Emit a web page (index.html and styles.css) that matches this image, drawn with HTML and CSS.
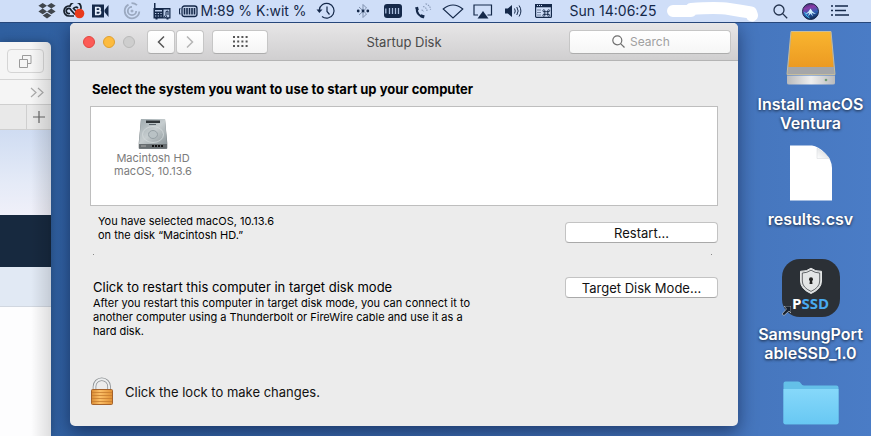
FILE: index.html
```
<!DOCTYPE html>
<html lang="en">
<head>
    <meta charset="UTF-8">
    <meta name="viewport" content="width=device-width, initial-scale=1.0">
    <title>Startup Disk</title>
    <link rel="stylesheet" href="styles.css">
</head>
<body>
    <header class="menubar">
        <div class="menu-group tight">
            <button class="menu-item" aria-label="Dropbox">
                <svg width="18" height="16" viewBox="0 0 18 16" fill="#40464d"><path d="M4.700 0L9 2.800 4.700 5.600 0.400 2.800zM13.300 0L17.600 2.800 13.300 5.600 9 2.800zM4.700 5.600L9 8.400 4.700 11.200 0.400 8.400zM13.300 5.600L17.600 8.400 13.300 11.200 9 8.400zM9 9.800l4.300 2.800L9 15.400l-4.300-2.800z"/></svg>
            </button>
            <button class="menu-item" aria-label="Creative Cloud">
                <svg width="22" height="16" viewBox="0 0 22 16"><g fill="none" stroke="#17202c" stroke-width="1.700"><path d="M11 13H6a5 5 0 1 1 1-9.900A5.500 5.500 0 0 1 17.800 6"/><path d="M12 11.500L8 7a2.500 2.500 0 1 0-2 3.500h1"/><path d="M13.500 8.500L10.500 5.500a3 3 0 0 1 4.500-.5"/></g><circle cx="16.500" cy="10.500" r="4.800" fill="#e8391c"/></svg>
            </button>
            <button class="menu-item" aria-label="Recorder">
                <svg width="17" height="14" viewBox="0 0 17 14"><path d="M0 0.500h12v13H0zM12.500 6L16.500 1v12L12.500 8z" fill="#15294a"/><path d="M3.800 3.500h2.800a1.500 1.500 0 0 1 0 3.200 1.700 1.700 0 0 1 0 3.800H3.800zM4 6.800h3" fill="none" stroke="#e6effc" stroke-width="1.700"/></svg>
            </button>
        </div>
        <div class="menu-group">
            <button class="menu-item" aria-label="Sync">
                <svg width="18" height="18" viewBox="0 0 18 18" fill="none" stroke="#9ba9c0" stroke-width="1.800"><path d="M5.500 2.600a7.300 7.300 0 1 0 10.800 6.900"/><path d="M9 4.800A4.200 4.200 0 1 0 13.200 9"/><path d="M8.500 1.200A8 8 0 0 1 14 3.200"/><circle cx="9" cy="9" r="0.600"/></svg>
            </button>
            <button class="menu-item" aria-label="Radio">
                <svg width="18" height="17" viewBox="0 0 18 17"><path d="M1 0h1.500v5H17.500v10.500h-2v1h-2v-1h-9v1h-2v-1H0.500V5H1z" fill="#15294a"/><g fill="#b9cbe8"><path d="M2 7h7v1.500H2zM2 10h1.300v1H2zM4.700 10h1.300v1H4.700zM7.400 10h1.300v1H7.400zM2 12.500h1.300v1H2zM4.700 12.500h1.300v1H4.700zM7.400 12.500h1.300v1H7.400zM10.500 6.500h5.800v7.800h-5.800z"/></g><path d="M12 12.500a1 1 0 1 0 1 0V8.500l2-.5v4" fill="none" stroke="#15294a"/></svg>
            </button>
        </div>
        <button class="menu-item battery">
            <svg width="19" height="13" viewBox="0 0 19 13"><rect x="3" y="1" width="15" height="10.500" rx="2.500" fill="#c6d5ee" stroke="#15294a" stroke-width="1.300"/><path d="M1.500 3.500Q0.500 3.500 0.500 5v2.500q0 1.500 1 1.500" fill="none" stroke="#15294a" stroke-width="1.200"/><path d="M5.500 3v6.500M8 3v6.500M10.500 3v6.500M13 3v6.500M15.500 3v6.500" stroke="#15294a" stroke-width="1.600"/></svg>
            M:89 % K:wit %
        </button>
        <button class="menu-item clock-item" aria-label="Time Machine">
            <svg width="20" height="18" viewBox="0 0 20 18" fill="none" stroke="#15294a" stroke-width="1.200"><path d="M3.300 8A7.400 7.400 0 1 1 6 14.500"/><path d="M11 4.500v5l2.500 3"/><path d="M0.500 7.500h6L3.400 11z" fill="#15294a" stroke="none"/></svg>
        </button>
        <div class="menu-group">
            <button class="menu-item" aria-label="Bluetooth">
                <svg width="14" height="16" viewBox="0 0 14 16"><path d="M3 4l7.500 7L7 14.500v-13L10.500 5 3 12" fill="none" stroke="#7f90ad"/><g fill="#15294a"><circle cx="2.200" cy="8" r="1.400"/><circle cx="7" cy="8" r="1.400"/><circle cx="11.800" cy="8" r="1.400"/></g></svg>
            </button>
            <button class="menu-item" aria-label="Memory">
                <svg width="18" height="14" viewBox="0 0 18 14"><rect width="18" height="14" rx="3" fill="#15294a"/><path d="M1.800 4.500v5M5.500 4v6M8.500 4v6M11.500 4v6M14.500 4v6" stroke="#a9bddd" stroke-width="1.300"/></svg>
            </button>
            <button class="menu-item" aria-label="Phone">
                <svg width="18" height="16" viewBox="0 0 18 16"><path d="M3 5.500C2 9.500 6 14.500 10 13.500" fill="none" stroke="#15294a" stroke-width="2"/><path d="M1 4.500l3-.8.8 3.300-2.300 1zM7 11.200l3.800 1.200L9.500 15.400 6 14z" fill="#15294a"/><path d="M7.500 7q2 0 2 2M9 3.500q4 1 4 5M11.500.8q5 1.500 5 6" fill="none" stroke="#8b9cba" stroke-width="1.200" stroke-dasharray="1.500 1"/></svg>
            </button>
            <button class="menu-item" aria-label="Wi-Fi">
                <svg width="22" height="15" viewBox="0 0 22 15"><path d="M1.200 5Q11-3 20.800 5L11 14z" fill="none" stroke="#15294a" stroke-width="1.100"/></svg>
            </button>
            <button class="menu-item" aria-label="AirPlay">
                <svg width="20" height="15" viewBox="0 0 20 15"><path d="M5 11H1V1h17.500v10h-4" fill="none" stroke="#15294a" stroke-width="1.200"/><path d="M10 7l5.500 7.500h-11z" fill="#15294a"/></svg>
            </button>
            <button class="menu-item" aria-label="Volume">
                <svg width="18" height="14" viewBox="0 0 18 14"><path d="M1 4.500h2.800L8 1v12L3.800 9.500H1z" fill="#15294a"/><path d="M10.500 4.500q1.500 2.500 0 5M12.800 3q2.700 4 0 8M15.100 1.500q3.600 5.500 0 11" fill="none" stroke="#15294a"/></svg>
            </button>
            <button class="menu-item" aria-label="Input menu">
                <svg width="17" height="14" viewBox="0 0 17 14"><rect x="0.600" y="0.600" width="15.800" height="12.800" rx="1" fill="none" stroke="#15294a" stroke-width="1.200"/><path d="M0 0h17v3.300H0z" fill="#15294a"/><path d="M2 1.500h1M4 1.500h1M6 1.500h1" stroke="#cfdef8"/><path d="M2.500 6h4M2.500 8.500h4M2.500 11h4" stroke="#15294a" stroke-dasharray="1 1"/><path d="M9.800 7v4M12.700 7v4M8.500 7.700h5.500M8.500 10.300h5.500" stroke="#15294a" stroke-width="0.900"/><g fill="none" stroke="#15294a" stroke-width="0.800"><circle cx="8.800" cy="6.700" r="1"/><circle cx="13.700" cy="6.700" r="1"/><circle cx="8.800" cy="11.300" r="1"/><circle cx="13.700" cy="11.300" r="1"/></g></svg>
            </button>
        </div>
        <time class="clock">Sun 14:06:25</time>
        <svg class="scribble" width="94" height="22" viewBox="0 0 94 22"><path d="M6 11H24V9Q50 7 62 9T84 12.500L85 15.500" fill="none" stroke="#fff" stroke-width="12" stroke-linecap="round" stroke-linejoin="round"/></svg>
        <div class="menu-group">
            <button class="menu-item" aria-label="Spotlight">
                <svg width="15" height="15" viewBox="0 0 15 15" fill="none" stroke="#25344f" stroke-width="1.300"><circle cx="6" cy="6" r="5"/><path d="M9.600 9.600l4.600 4.600"/></svg>
            </button>
            <button class="menu-item" aria-label="Siri">
                <svg width="17" height="17" viewBox="0 0 17 17"><defs><linearGradient id="siri" x1="0" y1="0" x2="0.300" y2="1"><stop offset="0" stop-color="#2b2f66"/><stop offset="0.350" stop-color="#8a3aa8"/><stop offset="0.700" stop-color="#2c5fb4"/><stop offset="1" stop-color="#123060"/></linearGradient></defs><circle cx="8.500" cy="8.500" r="8" fill="url(#siri)" stroke="#1b2748"/><path d="M3 11Q7 9 8.500 5.500Q10 9 14 11Q10.500 10.500 9.500 9.500L11 13.500 8.500 10.500 6 13.500 7.500 9.500Q6 10.500 3 11z" fill="#d6f5ff"/><path d="M2.500 9q2 5 5 6" stroke="#3ebfe8" fill="none"/></svg>
            </button>
            <button class="menu-item" aria-label="Notification Center">
                <svg width="18" height="12" viewBox="0 0 18 12" stroke="#15294a" stroke-width="1.500"><path d="M0 1h2M4 1h13M0 5.500h2M4 5.500h11M0 10h2M4 10h14"/></svg>
            </button>
        </div>
    </header>

    <main class="desktop">
        <section class="browser-window">
            <div class="browser-toolbar">
                <button class="tabs-btn" aria-label="Show all tabs">
                    <svg width="13" height="13" viewBox="0 0 13 13" fill="none" stroke="#9a9a9a"><path d="M0.500 4.500h8v8h-8zM3.500 4.500v-4h8.500v8H8.500"/></svg>
                </button>
            </div>
            <div class="bookmarks">
                <svg width="14" height="11" viewBox="0 0 14 11" fill="none" stroke="#aaa" stroke-width="1.200"><path d="M1 1l5 4.500L1 10M8 1l5 4.500L8 10"/></svg>
            </div>
            <div class="tabs">
                <button class="new-tab" aria-label="New tab">
                    <svg width="12" height="12" viewBox="0 0 12 12" stroke="#666" stroke-width="1.200"><path d="M6 0v12M0 6h12"/></svg>
                </button>
            </div>
            <div class="page-sky"></div>
            <div class="page-nav"></div>
            <div class="page-band"></div>
            <div class="page-body"></div>
        </section>

        <section class="window">
            <div class="titlebar">
                <div class="controls">
                    <div class="lights">
                        <button class="light close" aria-label="Close"></button>
                        <button class="light minimize" aria-label="Minimize"></button>
                        <button class="light zoom" aria-label="Zoom" disabled></button>
                    </div>
                    <div class="nav">
                        <button class="tool" aria-label="Back">
                            <svg width="8" height="14" viewBox="0 0 8 14" fill="none" stroke="#555" stroke-width="1.500"><path d="M7 1.500L1.500 7 7 12.500"/></svg>
                        </button>
                        <button class="tool" aria-label="Forward" disabled>
                            <svg width="8" height="14" viewBox="0 0 8 14" fill="none" stroke="#b5b5b5" stroke-width="1.500"><path d="M1 1.500L6.500 7 1 12.500"/></svg>
                        </button>
                    </div>
                    <button class="tool show-all" aria-label="Show all">
                        <svg width="15" height="11" viewBox="0 0 15 11" stroke="#555" stroke-width="2"><path d="M0 1h15M0 5.500h15M0 10h15" stroke-dasharray="2 2.200"/></svg>
                    </button>
                </div>
                <h1>Startup Disk</h1>
                <label class="search">
                    <svg width="13" height="13" viewBox="0 0 13 13" fill="none" stroke="#6f6f6f" stroke-width="1.200"><circle cx="5.300" cy="5.300" r="4.500"/><path d="M8.600 8.600l3.900 3.900"/></svg>
                    <input type="search" placeholder="Search" aria-label="Search">
                </label>
            </div>

            <div class="content">
                <h2>Select the system you want to use to start up your computer</h2>
                <div class="systems">
                    <button class="system">
                        <svg width="30" height="32" viewBox="0 0 30 32"><defs><linearGradient id="metal" x1="0" y1="0" x2="1" y2="1"><stop offset="0" stop-color="#9faaae"/><stop offset="0.500" stop-color="#c6cdcf"/><stop offset="1" stop-color="#8d979b"/></linearGradient></defs><path d="M3 1h24l2.300 24v5q0 1-1 1H1.700q-1 0-1-1v-5z" fill="#737a7d"/><path d="M3 1h24l2 25H1z" fill="url(#metal)"/><path d="M1 26h28v4H1z" fill="#686e71"/><path d="M8 2.500h14v2.500H8z" fill="#2f3538"/><path d="M11 6.500h7" stroke="#59636a"/><ellipse cx="15" cy="16.500" rx="10.500" ry="8" fill="none" stroke="#d4dadc" stroke-width="0.800"/><ellipse cx="15" cy="16.500" rx="4.500" ry="4" fill="#b9c2c5" stroke="#96a0a5"/><path d="M14 28h11" stroke="#111" stroke-width="2" stroke-dasharray="2 1"/><path d="M3 28h5" stroke="#aaa"/></svg>
                        <span>Macintosh HD<br>macOS, 10.13.6</span>
                    </button>
                </div>
                <div class="row selected">
                    <p>You have selected macOS, 10.13.6<br>on the disk “Macintosh HD.”</p>
                    <button class="push">Restart...</button>
                </div>
                <div class="divider"></div>
                <div class="row target">
                    <div>
                        <h3>Click to restart this computer in target disk mode</h3>
                        <p>After you restart this computer in target disk mode, you can connect it to<br>another computer using a Thunderbolt or FireWire cable and use it as a<br>hard disk.</p>
                    </div>
                    <button class="push">Target Disk Mode...</button>
                </div>
                <button class="lock">
                    <svg width="24" height="29" viewBox="0 0 24 29"><defs><linearGradient id="brass" x1="0" y1="0" x2="1" y2="0"><stop offset="0" stop-color="#d98b32"/><stop offset="0.400" stop-color="#fbbf67"/><stop offset="1" stop-color="#e08f33"/></linearGradient></defs><path d="M4.500 14V9.500a7.300 7.300 0 0 1 14.600 0V14" fill="none" stroke="#8c9093" stroke-width="3.600"/><path d="M4.500 14V9.500a7.300 7.300 0 0 1 14.600 0V14" fill="none" stroke="#eceeef" stroke-width="2"/><rect x="1.500" y="12.500" width="21" height="15" rx="1" fill="url(#brass)" stroke="#a5622a"/><path d="M2 15.500h20M2 18.500h20M2 21.500h20M2 24.500h20" stroke="#c67c2e" stroke-width="0.800"/></svg>
                    Click the lock to make changes.
                </button>
            </div>
        </section>

        <nav class="desktop-icons">
            <a href="#" class="file">
                <span class="icon">
                    <svg width="50" height="54" viewBox="0 0 50 54"><defs><linearGradient id="orange" x1="0" y1="0" x2="0" y2="1"><stop offset="0" stop-color="#f9b52f"/><stop offset="1" stop-color="#ec9a22"/></linearGradient><linearGradient id="front" x1="0" y1="0" x2="1" y2="0"><stop offset="0" stop-color="#b9babc"/><stop offset="0.500" stop-color="#eee"/><stop offset="1" stop-color="#b9babc"/></linearGradient></defs><path d="M5 0.500h40l4 43H1z" fill="#a5a6a8" stroke="#c7bd9c"/><path d="M5.500 1h39l3 35h-45z" fill="url(#orange)"/><path d="M1 44.500h48V52q0 1.500-2 1.500H3q-2 0-2-1.500z" fill="url(#front)"/><circle cx="40" cy="49" r="1.300" fill="#709a75"/></svg>
                </span>
                <span>Install macOS<br>Ventura</span>
            </a>
            <a href="#" class="file">
                <span class="icon">
                    <svg width="42" height="56" viewBox="0 0 42 56"><defs><linearGradient id="curl" x1="1" y1="0" x2="0" y2="1"><stop offset="0" stop-color="#cfd2d6"/><stop offset="1" stop-color="#fff"/></linearGradient></defs><path d="M0 0.500h22Q28 1 35 8T42 23v32.500H0z" fill="#fff"/><path d="M27 3V13.500H39.500Q37 10.500 34 8T27 3z" fill="url(#curl)" stroke="#d3d6da" stroke-width="0.500"/></svg>
                </span>
                <span>results.csv</span>
            </a>
            <a href="#" class="file">
                <span class="icon">
                    <span class="app-icon">
                        <svg width="24" height="28" viewBox="0 0 24 28"><path d="M12 1.200Q16 4.500 22.500 4.300V14q0 8-10.500 12.500Q1.500 22 1.500 14V4.300Q8 4.500 12 1.200z" fill="#e3e5e6" stroke="#e3e5e6"/><path d="M12 3.200Q16 6 20.700 6v8q0 6.500-8.700 10.400Q3.300 20.500 3.300 14V6Q8 6 12 3.200z" fill="none" stroke="#2b2f33" stroke-width="0.700"/><circle cx="12" cy="12.300" r="2" fill="#222"/><path d="M11 13h2l.5 4h-3z" fill="#222"/></svg>
                        <b>P<i>SSD</i></b>
                        <svg class="alias" width="9" height="10" viewBox="0 0 9 10"><path d="M2 0h7v7L7 5 2 9.500 0 8l4.500-5z" fill="#17202c" stroke="#d5d9dd" stroke-width="0.600"/></svg>
                    </span>
                </span>
                <span>SamsungPort<br>ableSSD_1.0</span>
            </a>
            <a href="#" class="file" aria-label="Folder">
                <span class="icon">
                    <svg width="56" height="44" viewBox="0 0 56 44"><defs><linearGradient id="folder" x1="0" y1="0" x2="0" y2="1"><stop offset="0" stop-color="#86d8fa"/><stop offset="1" stop-color="#68c8f3"/></linearGradient></defs><path d="M0.500 2.500Q.5 .5 2.500 .5H15q2 0 3 2t3 2H53.500q2 0 2 2V41.500q0 2-2 2h-51q-2 0-2-2z" fill="#64c0e8"/><path d="M0.500 8h55v33.500q0 1.500-2 1.500h-51q-2 0-2-1.500z" fill="url(#folder)"/></svg>
                </span>
            </a>
        </nav>
    </main>
</body>
</html>
```
FILE: styles.css
```
* {
    box-sizing: border-box;
}
body {
    margin: 0;
    min-height: 100vh;
    display: flex;
    flex-direction: column;
    font-family: Inter, "Liberation Sans", sans-serif;
    font-size: 13px;
    line-height: 16px;
    color: #111;
    background: linear-gradient(90deg, #2f5f9f, #3a69ad 50%, #4778c0 90%, #4a7cc6);
}
h1, h2, h3, p {
    margin: 0;
}
button {
    font: inherit;
    color: inherit;
    padding: 0;
    border: none;
    background: none;
}
svg {
    flex: none;
}

/* menu bar */
.menubar {
    display: flex;
    justify-content: flex-end;
    align-items: center;
    height: 23px;
    padding-right: 16px;
    background: #cfdef8;
    border-bottom: 1px solid #27477a;
    font-size: 14px;
    color: #15294a;
    position: relative;
    z-index: 2;
}
.menu-group {
    display: flex;
}
.menu-item {
    display: flex;
    align-items: center;
    justify-content: center;
    width: 30px;
    height: 22px;
    white-space: nowrap;
}
.tight {
    margin-right: 3px;
}
.tight .menu-item {
    width: 27px;
}
.menu-item.battery {
    width: 128px;
    gap: 2px;
    margin-left: 2px;
}
.menu-item.clock-item {
    margin: 0 7px 0 4px;
}
.clock {
    width: 90px;
    margin: 0 9px 0 10px;
    white-space: nowrap;
    text-align: center;
}
.scribble {
    margin-right: 4px;
}

/* desktop */
.desktop {
    flex: 1;
    position: relative;
}
.browser-window {
    position: absolute;
    left: 0;
    top: 19px;
    bottom: 0;
    width: 51px;
    display: flex;
    flex-direction: column;
    overflow: hidden;
    border-top-right-radius: 5px;
    background: #f5f5f5;
    box-shadow: 0 0 10px rgba(0, 0, 0, 0.3);
}
.browser-window::after {
    content: "";
    position: absolute;
    top: 0;
    right: 0;
    bottom: 0;
    width: 20px;
    background: linear-gradient(90deg, transparent, rgba(0, 0, 0, 0.12));
}
.browser-toolbar {
    display: flex;
    justify-content: flex-end;
    padding: 7px;
    height: 38px;
    border-bottom: 1px solid #d5d5d5;
}
.tabs-btn {
    width: 39px;
    height: 24px;
    border: 1px solid #d5d5d5;
    border-radius: 4px;
    display: flex;
    align-items: center;
    justify-content: center;
}
.bookmarks {
    display: flex;
    align-items: center;
    justify-content: flex-end;
    padding-right: 7px;
    height: 25px;
    border-bottom: 1px solid #cfcfcf;
}
.tabs {
    display: flex;
    justify-content: flex-end;
    height: 25px;
    background: #e9e9e9;
    border-bottom: 1px solid #cfcfcf;
}
.new-tab {
    display: flex;
    align-items: center;
    justify-content: center;
    width: 25px;
    border-left: 1px solid #cfcfcf;
}
.page-sky {
    height: 85px;
    background: linear-gradient(#cfdcf2, #e4eaf7 60%, #f0f0f9);
}
.page-nav {
    height: 52px;
    background: #17293f;
}
.page-band {
    height: 40px;
    background: #e1e9f4;
    border-bottom: 1px solid #d1d7e0;
}
.page-body {
    flex: 1;
    background: #fdfdfe;
}

/* preferences window */
.window {
    position: absolute;
    left: 70px;
    right: 133px;
    top: 0;
    border-radius: 5px;
    background: #ececec;
    box-shadow: 0 6px 18px rgba(0, 10, 40, 0.5);
}
.titlebar {
    display: grid;
    grid-template-columns: 1fr auto 1fr;
    align-items: center;
    height: 38px;
    padding: 0 7px;
    border-bottom: 1px solid #b4b4b4;
    border-radius: 5px 5px 0 0;
    background: linear-gradient(#e7e6e7, #d0cfd0);
}
.controls {
    display: flex;
    align-items: center;
    padding-left: 6px;
}
.lights {
    display: flex;
    gap: 8px;
    margin-right: 12px;
}
.light {
    width: 12px;
    height: 12px;
    border: 1px solid #e2463f;
    border-radius: 50%;
    background: #fc5b57;
}
.light.minimize {
    border-color: #e0a02f;
    background: #fdbb3e;
}
.light.zoom {
    border-color: #b9b9b9;
    background: #cecece;
}
.nav {
    display: flex;
    gap: 1px;
    margin-right: 8px;
}
.tool {
    display: flex;
    align-items: center;
    justify-content: center;
    width: 28px;
    height: 24px;
    border: 1px solid #c6c6c6;
    border-bottom-color: #adadad;
    border-radius: 4px;
    background: linear-gradient(#fff, #f4f4f4);
}
.show-all {
    width: 56px;
}
.titlebar h1 {
    font-size: 13px;
    font-weight: 400;
    color: #4a4a4a;
}
.search {
    display: flex;
    justify-self: end;
    align-items: center;
    gap: 5px;
    width: 162px;
    height: 24px;
    padding-left: 42px;
    border: 1px solid #c6c6c6;
    border-bottom-color: #adadad;
    border-radius: 4px;
    background: linear-gradient(#fff, #f6f6f6);
}
.search input {
    width: 100px;
    padding: 0;
    border: none;
    outline: none;
    background: none;
    font: inherit;
    font-size: 12px;
}
.search input::placeholder {
    color: #a0a0a0;
}
.content {
    padding: 20px 20px;
}
.content h2 {
    margin: 0 2px 9px;
    font-size: 13px;
    font-weight: 700;
    color: #000;
}
.systems {
    height: 100px;
    padding: 11px 16px;
    border: 1px solid #bebebe;
    background: #fff;
}
.system {
    display: flex;
    flex-direction: column;
    align-items: center;
    gap: 2px;
    width: 92px;
    font-size: 11px;
    line-height: 13px;
    color: #7c7c7c;
}
.row {
    display: flex;
    justify-content: space-between;
    align-items: flex-start;
}
.row p {
    font-size: 11px;
    line-height: 14px;
    color: #000;
}
.row h3 {
    font-size: 13px;
    font-weight: 400;
    margin-bottom: 1px;
    color: #000;
}
.selected {
    padding: 8px 0 0 8px;
}
.selected .push {
    margin-top: 8px;
}
.divider {
    display: flex;
    justify-content: space-between;
    height: 1px;
    margin: 11px 6px 24px 3px;
}
.divider::before, .divider::after {
    content: "";
    width: 1px;
    background: #888;
}
.target {
    padding-left: 3px;
}
.push {
    width: 153px;
    height: 21px;
    border: 1px solid #c3c3c3;
    border-bottom-color: #a9a9a9;
    border-radius: 4px;
    background: #fff;
}
.target .push {
    margin-top: -2px;
}
.lock {
    display: flex;
    align-items: center;
    gap: 11px;
    margin-top: 39px;
}

/* files on the desktop */
.desktop-icons {
    position: absolute;
    top: 3px;
    right: 0;
    width: 121px;
    display: grid;
    grid-template-rows: repeat(3, 115px) auto;
}
.file {
    display: flex;
    flex-direction: column;
    align-items: center;
    gap: 5px;
    text-align: center;
    text-decoration: none;
    font-size: 16px;
    font-weight: 600;
    line-height: 19px;
    color: #fff;
    text-shadow: 0 1px 3px rgba(0, 0, 0, 0.7);
}
.icon {
    display: flex;
    align-items: center;
    height: 64px;
}
.app-icon {
    position: relative;
    display: flex;
    flex-direction: column;
    align-items: center;
    width: 58px;
    height: 58px;
    padding-top: 8px;
    border-radius: 18px;
    background: #2b3036;
    text-shadow: none;
}
.app-icon b {
    font-family: "Open Sans", sans-serif;
    font-size: 15px;
    line-height: 17px;
    font-weight: 700;
}
.app-icon i {
    font-style: normal;
    color: #49aaf0;
}
.alias {
    position: absolute;
    left: 0;
    bottom: 1px;
}
```
